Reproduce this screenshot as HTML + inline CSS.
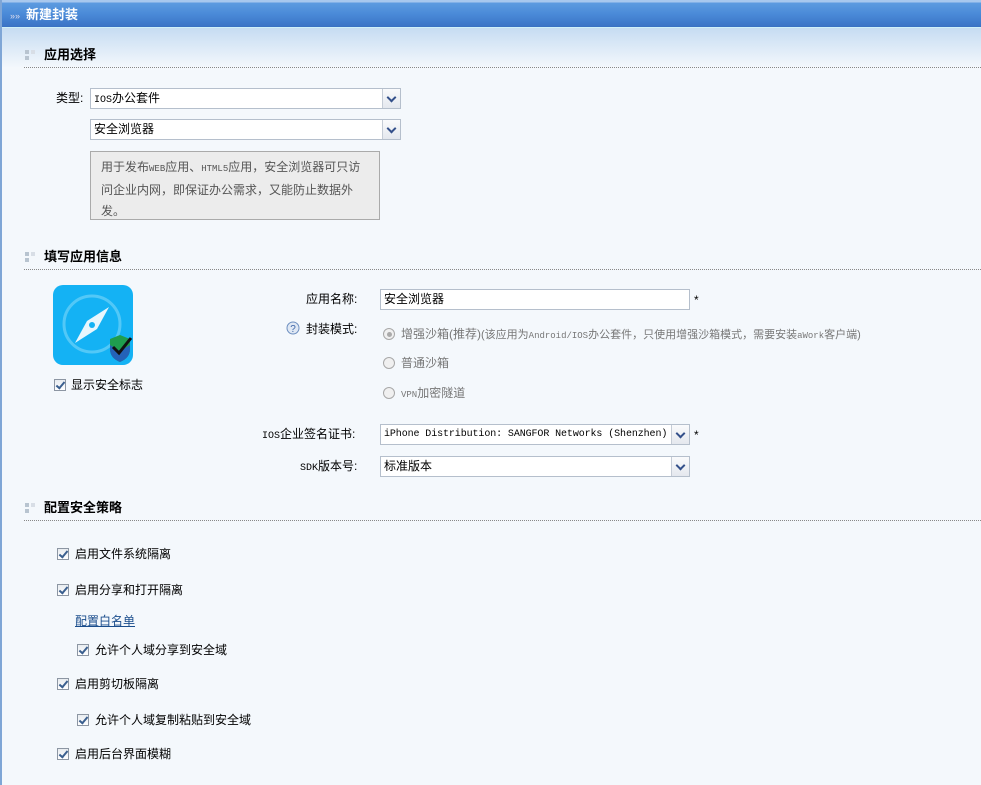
<!DOCTYPE html>
<html><head><meta charset="utf-8"><style>
*{margin:0;padding:0;box-sizing:border-box}
body{width:981px;height:785px;overflow:hidden;background:#f4f8fc;font-family:"Liberation Sans","Noto Sans CJK SC","WenQuanYi Zen Hei",sans-serif;font-size:12px;color:#000;position:relative}
.a{position:absolute;white-space:nowrap;line-height:14px}
.hdr{position:absolute;left:0;top:0;width:981px;height:28px;background:linear-gradient(#a8c8ee 0,#a8c8ee 2px,#5d9be0 3px,#4a8ad8 14px,#3b74c6 26px,#3b6fc0 27px);border-bottom:1px solid #cff0f8}
.top{position:absolute;left:0;top:28px;width:981px;height:40px;background:linear-gradient(#c6dcf2,#f4f8fc)}
.lb{position:absolute;left:0;top:0;width:2px;height:785px;background:#7fa6d6}
.sec{font-weight:bold;font-size:13px}
.dot{position:absolute;left:24px;width:957px;border-top:1px dotted #888}
.sq{position:absolute;width:10px;height:10px}
.sq i{position:absolute;width:4px;height:4px;background:#b8c4d0}
.sel{position:absolute;height:21px;border:1px solid #b5bfcc;background:#fff;padding-left:3px;line-height:19px;white-space:nowrap;overflow:hidden}
.sel b{position:absolute;right:0;top:0;width:18px;height:19px;border-left:1px solid #c5ccd6;background:linear-gradient(#fafbfc,#e4e8ee)}
.sel b:after{content:"";position:absolute;left:5px;top:5px;width:5px;height:5px;border-right:2px solid #34508a;border-bottom:2px solid #34508a;transform:rotate(45deg)}
.cb{position:absolute;width:12px;height:12px;border:1px solid #8c96a3;background:linear-gradient(#e8ecf0,#fff)}
.cb:after{content:"";position:absolute;left:3px;top:0;width:3px;height:7px;border-right:2px solid #3a5f8f;border-bottom:2px solid #3a5f8f;transform:rotate(40deg)}
.rd{position:absolute;width:12px;height:12px;border:1px solid #a8a8a8;border-radius:50%;background:#f0f0f0}
.g{color:#777}
.m{font-family:"Liberation Mono",monospace;font-size:9px}
</style></head><body>
<div class="top"></div>
<div class="hdr"></div>
<div class="lb"></div>
<div class="a" style="left:10px;top:9px;color:#dde;font-size:9px">»»</div>
<div class="a" style="left:26px;top:8px;color:#fff;font-weight:bold;font-size:13px">新建封装</div>

<div class="sq" style="left:25px;top:50px"><i style="left:0;top:0"></i><i style="left:6px;top:0;background:#d8dee6"></i><i style="left:0;top:6px"></i></div>
<div class="a sec" style="left:44px;top:48px">应用选择</div>
<div class="dot" style="top:67px"></div>

<div class="a" style="left:56px;top:91px">类型:</div>
<div class="sel" style="left:90px;top:88px;width:311px"><span class="m" style="font-size:10px">IOS</span>办公套件<b></b></div>
<div class="sel" style="left:90px;top:119px;width:311px">安全浏览器<b></b></div>
<div style="position:absolute;left:90px;top:151px;width:290px;height:69px;background:#ececec;border:1px solid #aaa;color:#555;padding:5px 0 0 10px;line-height:21px;font-size:12px;white-space:nowrap">用于发布<span class="m">WEB</span>应用、<span class="m">HTML5</span>应用，安全浏览器可只访<br>问企业内网，即保证办公需求，又能防止数据外<br>发。</div>

<div class="sq" style="left:25px;top:252px"><i style="left:0;top:0"></i><i style="left:6px;top:0;background:#d8dee6"></i><i style="left:0;top:6px"></i></div>
<div class="a sec" style="left:44px;top:250px">填写应用信息</div>
<div class="dot" style="top:269px"></div>

<svg style="position:absolute;left:53px;top:285px" width="80" height="80" viewBox="0 0 80 80">
<rect width="80" height="80" rx="10" fill="#14b2f4"/>
<circle cx="39" cy="39" r="28" fill="none" stroke="#52c8f7" stroke-width="3"/>
<path d="M56 22 L44 44 L22 58 L34 36 Z" fill="#e8f6fd"/>
<circle cx="39" cy="40" r="3" fill="#14b2f4"/>
<path d="M57 54 L67 50 L77 54 L77 64 Q77 73 67 77 Q57 73 57 64 Z" fill="#1f9d4e"/>
<path d="M57 60 L67 66 L77 60 L77 64 Q77 73 67 77 Q57 73 57 64 Z" fill="#2463b8"/>
<path d="M60 62 L66 68 L78 53" fill="none" stroke="#111" stroke-width="3"/>
</svg>
<div class="cb" style="left:54px;top:379px"></div>
<div class="a" style="left:71px;top:378px">显示安全标志</div>

<div class="a" style="left:306px;top:292px">应用名称:</div>
<div class="sel" style="left:380px;top:289px;width:310px">安全浏览器</div>
<div class="a" style="left:694px;top:293px">*</div>
<svg style="position:absolute;left:286px;top:321px" width="14" height="14"><circle cx="7" cy="7" r="6" fill="#dfe8f4" stroke="#6d8fc0"/><text x="7" y="11" font-size="10" text-anchor="middle" fill="#3d66a8" font-family="Liberation Sans">?</text></svg>
<div class="a" style="left:306px;top:322px">封装模式:</div>
<div class="rd" style="left:383px;top:328px"></div><div style="position:absolute;left:387px;top:332px;width:5px;height:5px;border-radius:50%;background:#aaa"></div>
<div class="a g" style="left:401px;top:327px">增强沙箱(推荐)<span style="font-size:11px">(该应用为<span class="m">Android/IOS</span>办公套件，只使用增强沙箱模式，需要安装<span class="m">aWork</span>客户端)</span></div>
<div class="rd" style="left:383px;top:357px"></div>
<div class="a g" style="left:401px;top:356px">普通沙箱</div>
<div class="rd" style="left:383px;top:387px"></div>
<div class="a g" style="left:401px;top:386px"><span class="m">VPN</span>加密隧道</div>

<div class="a" style="left:262px;top:427px"><span class="m" style="font-size:10px">IOS</span>企业签名证书:</div>
<div class="sel" style="left:380px;top:424px;width:310px;font-family:'Liberation Mono',monospace;font-size:10px;letter-spacing:-0.1px">iPhone Distribution: SANGFOR Networks (Shenzhen)<b></b></div>
<div class="a" style="left:694px;top:428px">*</div>
<div class="a" style="left:300px;top:459px"><span class="m" style="font-size:10px">SDK</span>版本号:</div>
<div class="sel" style="left:380px;top:456px;width:310px">标准版本<b></b></div>

<div class="sq" style="left:25px;top:503px"><i style="left:0;top:0"></i><i style="left:6px;top:0;background:#d8dee6"></i><i style="left:0;top:6px"></i></div>
<div class="a sec" style="left:44px;top:501px">配置安全策略</div>
<div class="dot" style="top:520px"></div>

<div class="cb" style="left:57px;top:548px"></div><div class="a" style="left:75px;top:547px">启用文件系统隔离</div>
<div class="cb" style="left:57px;top:584px"></div><div class="a" style="left:75px;top:583px">启用分享和打开隔离</div>
<div class="a" style="left:75px;top:614px;color:#1a4d8c;text-decoration:underline">配置白名单</div>
<div class="cb" style="left:77px;top:644px"></div><div class="a" style="left:95px;top:643px">允许个人域分享到安全域</div>
<div class="cb" style="left:57px;top:678px"></div><div class="a" style="left:75px;top:677px">启用剪切板隔离</div>
<div class="cb" style="left:77px;top:714px"></div><div class="a" style="left:95px;top:713px">允许个人域复制粘贴到安全域</div>
<div class="cb" style="left:57px;top:748px"></div><div class="a" style="left:75px;top:747px">启用后台界面模糊</div>
</body></html>
